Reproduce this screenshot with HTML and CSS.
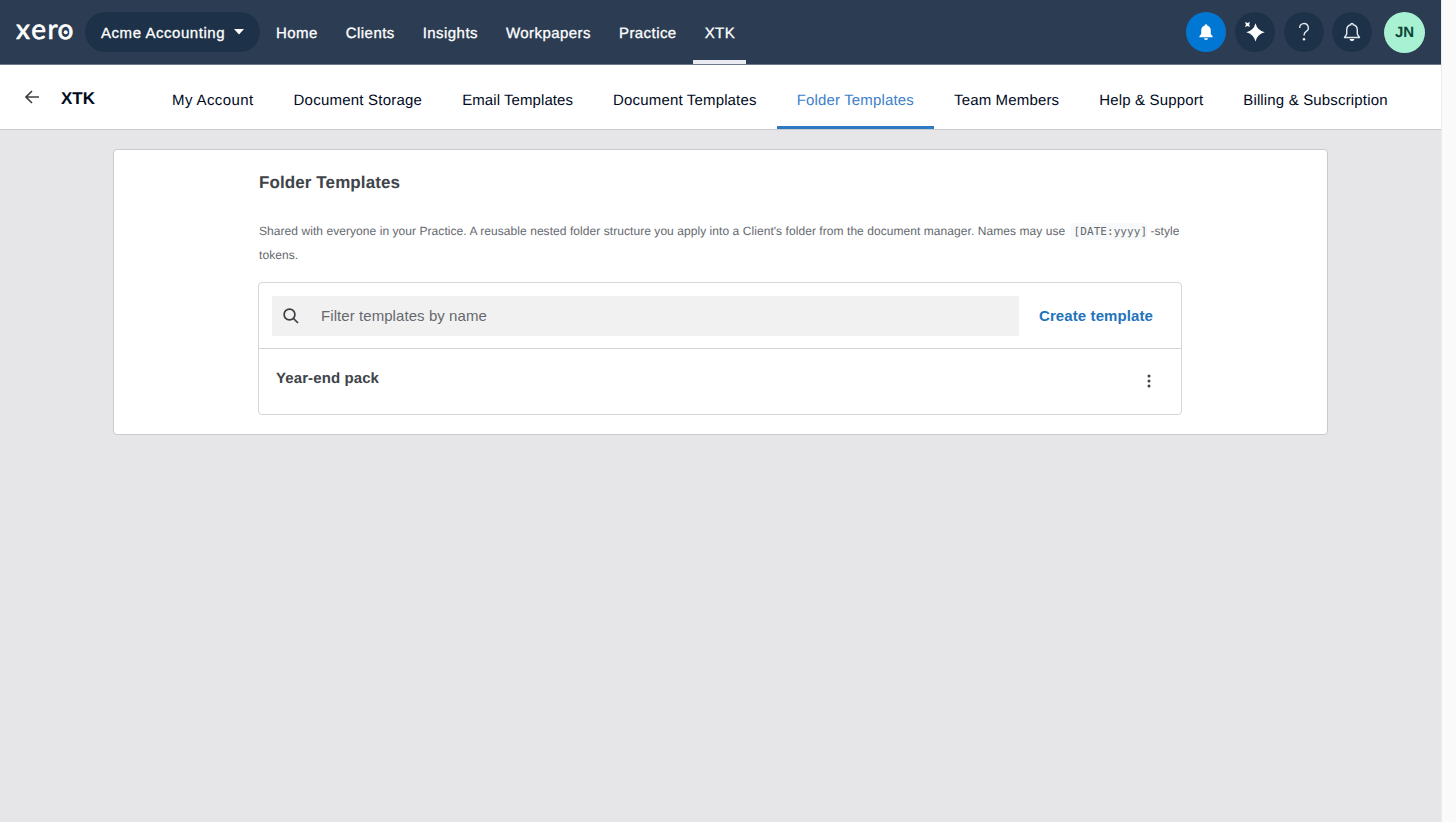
FILE: index.html
```
<!DOCTYPE html>
<html lang="en">
<head>
  <meta charset="UTF-8" />
  <meta name="viewport" content="width=device-width, initial-scale=1.0" />
  <title>Folder Templates</title>
  <link rel="stylesheet" href="styles.css">
</head>
<body>
  <div class="page">
    <header class="topbar">
      <svg class="logo" width="60" height="40" viewBox="0 0 60 40">
        <text x="0 15.2 31.6 41.6" y="27.2">xero</text>
        <circle cx="49.7" cy="20.2" r="2" />
      </svg>
      <button class="org" type="button">
        Acme Accounting
        <svg width="10" height="6" viewBox="0 0 10 6"><path d="M0 0h10L5 5.5z" /></svg>
      </button>
      <nav class="main-nav">
        <a>Home</a>
        <a>Clients</a>
        <a>Insights</a>
        <a>Workpapers</a>
        <a>Practice</a>
        <a class="active">XTK</a>
      </nav>
      <div class="actions">
        <button class="round blue" type="button">
          <svg width="20" height="20" viewBox="0 0 20 20"><path fill="#fff" d="M10 2.3a1.2 1.2 0 0 1 1.2 1.2C13.7 4.2 14.8 6.2 14.8 8.5V12l1.8 2.3v1H3.4v-1L5.2 12V8.5C5.2 6.2 6.3 4.2 8.8 3.5A1.2 1.2 0 0 1 10 2.3zM8 16.3h4a2 1.7 0 0 1-4 0z" /></svg>
        </button>
        <button class="round" type="button">
          <svg width="24" height="24" viewBox="0 0 24 24"><path fill="#fff" d="M12.5 3.3Q14.3 10.5 21.7 12.3Q14.3 14.1 12.5 21.5Q10.7 14.1 3.3 12.3Q10.7 10.5 12.5 3.3z" /><path fill="#fff" d="M2 2L4.5 2.9 7 2 6.1 4.5 7 7 4.5 6.1 2 7 2.9 4.5z" /></svg>
        </button>
        <button class="round" type="button">
          <svg width="20" height="20" viewBox="0 0 20 20"><path fill="none" stroke="#e4e9f0" stroke-width="1.4" d="M5.7 6a4.3 4.2 0 1 1 6.5 3.4c-1.5 1-2.2 1.8-2.2 4" /><circle cx="10" cy="17.3" r="1.2" fill="#fff" /></svg>
        </button>
        <button class="round" type="button">
          <svg width="20" height="20" viewBox="0 0 20 20"><path fill="none" stroke="#e4e9f0" stroke-width="1.4" stroke-linejoin="round" d="M8.8 2.7a1.2 1.2 0 0 1 2.4 0C13.8 3.3 15.3 5.4 15.3 8v4.2l2.2 3.3H2.5l2.2-3.3V8c0-2.6 1.5-4.7 4.1-5.3z" /><path fill="#fff" d="M7.6 17h4.8a2.4 2 0 0 1-4.8 0z" /></svg>
        </button>
        <div class="avatar">JN</div>
      </div>
    </header>

    <div class="subbar">
      <svg class="back" width="14" height="14" viewBox="0 0 14 14"><path d="M14 7H1.2M7 1L1 7l6 6" /></svg>
      <h1>XTK</h1>
      <nav class="tabs">
        <a>My Account</a>
        <a>Document Storage</a>
        <a>Email Templates</a>
        <a>Document Templates</a>
        <a class="active">Folder Templates</a>
        <a>Team Members</a>
        <a>Help &amp; Support</a>
        <a>Billing &amp; Subscription</a>
      </nav>
    </div>

    <main class="panel">
      <h2>Folder Templates</h2>
      <p class="intro">Shared with everyone in your Practice. A reusable nested folder structure you apply into a Client's folder from the document manager. Names may use <code>[DATE:yyyy]</code> -style tokens.</p>

      <div class="list">
        <div class="toolbar">
          <label class="search">
            <svg width="16" height="16" viewBox="0 0 16 16"><circle cx="6.5" cy="6.5" r="5.4" /><path d="M10.5 10.5L15 15" /></svg>
            <input type="text" placeholder="Filter templates by name" />
          </label>
          <button class="create" type="button">Create template</button>
        </div>
        <div class="row">
          <span>Year-end pack</span>
          <button class="more" type="button">
            <svg width="4" height="14" viewBox="0 0 4 14"><circle cx="2" cy="2" r="1.5" /><circle cx="2" cy="7" r="1.5" /><circle cx="2" cy="12" r="1.5" /></svg>
          </button>
        </div>
      </div>
    </main>
  </div>
</body>
</html>
```
FILE: styles.css
```
* {
  box-sizing: border-box;
}
body {
  margin: 0;
  background: #fafafa;
  font-family: "Liberation Sans", Arial, sans-serif;
  font-size: 15px;
  color: #404449;
  text-rendering: geometricPrecision;
}
button {
  border: none;
  padding: 0;
  font: inherit;
  background: none;
  cursor: pointer;
}
.page {
  width: 1441px;
  min-height: 822px;
  background: #e6e6e9;
  box-shadow: 1px 0 0 #ebebeb;
}

/* Top bar */
.topbar {
  display: flex;
  align-items: center;
  height: 65px;
  padding: 0 16px;
  background: #2c3d53;
  color: #fff;
  border-bottom: 1px solid #6f7b8a;
}
.logo {
  flex: none;
  margin-right: 9px;
}
.logo text {
  font-family: Lato, sans-serif;
  font-size: 28px;
  fill: #fff;
  stroke: #fff;
  stroke-width: 0.6px;
}
.logo circle {
  fill: #fff;
}
.org {
  display: flex;
  align-items: center;
  justify-content: space-between;
  width: 175px;
  height: 40px;
  padding: 0 16px;
  border-radius: 20px;
  background: #1d3148;
  color: #fff;
  white-space: nowrap;
  letter-spacing: 0.55px;
  -webkit-text-stroke: 0.3px #fff;
}
.org svg {
  fill: #fff;
}
.main-nav {
  display: flex;
  height: 64px;
  margin-left: 2px;
}
.main-nav a {
  display: flex;
  align-items: center;
  padding: 4px 14px 0;
  border-bottom: 4px solid transparent;
  border-top: 2px solid transparent;
  letter-spacing: 0.44px;
  -webkit-text-stroke: 0.3px #fff;
}
.main-nav .active {
  margin-left: 2px;
  padding: 4px 11px 0 12px;
  border-bottom-color: #e9ebf1;
}
.actions {
  display: flex;
  gap: 8.7px;
  margin-left: auto;
}
.round,
.avatar {
  display: flex;
  align-items: center;
  justify-content: center;
  width: 40px;
  height: 40px;
  border-radius: 50%;
  background: #1d3148;
}
.round.blue {
  background: #0078d3;
}
.avatar {
  width: 41px;
  height: 41px;
  margin-left: 3px;
  background: #a8f1d3;
  color: #0c4638;
  font-weight: bold;
}

/* Section bar */
.subbar {
  display: flex;
  align-items: center;
  height: 65px;
  padding-left: 25px;
  background: #fff;
  border-bottom: 1px solid #c9cacd;
  color: #000a1e;
}
.back {
  fill: none;
  stroke: #404040;
  stroke-width: 1.6;
}
.subbar h1 {
  width: 91px;
  margin: 3px 0 0 22px;
  font-size: 17px;
}
.tabs {
  display: flex;
  height: 64px;
}
.tabs a {
  padding: 27px 20px 0;
  line-height: 18px;
  border-bottom: 3px solid transparent;
  letter-spacing: 0.16px;
  white-space: nowrap;
}
.tabs a:first-child {
  letter-spacing: 0.4px;
}
.tabs a:nth-child(2) {
  letter-spacing: 0.22px;
}
.tabs a:nth-child(3) {
  letter-spacing: 0.08px;
}
.tabs .active {
  color: #3c7fc8;
  border-bottom-color: #2f79c3;
}

/* Content */
.panel {
  width: 1215px;
  height: 286px;
  margin: 19px 0 0 113px;
  padding: 22px 144px 0;
  background: #fff;
  border: 1px solid #c9cacd;
  border-radius: 4px;
}
.panel h2 {
  margin: 0 0 0 1px;
  font-size: 17px;
  line-height: 22px;
  letter-spacing: 0.1px;
}
.intro {
  margin: 25px 0 15px 1px;
  font-size: 12px;
  line-height: 24px;
  letter-spacing: 0.06px;
  color: #65696e;
}
.intro code {
  margin-left: 2px;
  padding: 2px 0 2px 3px;
  border-radius: 3px;
  background: #f7f9fa;
  font-family: "DejaVu Sans Mono", monospace;
  font-size: 11px;
  line-height: 1;
}
.list {
  width: 924px;
  border: 1px solid #d5d6d9;
  border-radius: 4px;
}
.toolbar {
  display: flex;
  align-items: center;
  height: 66px;
  padding-left: 13px;
  border-bottom: 1px solid #d5d6d9;
}
.search {
  display: flex;
  align-items: center;
  width: 747px;
  height: 40px;
  padding-left: 11px;
  background: #f1f1f2;
}
.search svg {
  fill: none;
  stroke: #3c3f44;
  stroke-width: 1.7;
}
.search input {
  flex: 1;
  margin-left: 22px;
  padding: 0;
  border: none;
  outline: none;
  background: none;
  font: inherit;
  letter-spacing: 0.07px;
}
.search input::placeholder {
  color: #65696e;
}
.create {
  margin-left: 20px;
  color: #1f74bb;
  font-weight: bold;
  letter-spacing: 0.1px;
}
.row {
  display: flex;
  justify-content: space-between;
  height: 65px;
  padding: 21px 30px 0 17px;
  font-weight: bold;
  letter-spacing: 0.1px;
}
.more {
  height: 14px;
  margin-top: 4px;
  line-height: 0;
}
.more svg {
  fill: #404449;
}
```
